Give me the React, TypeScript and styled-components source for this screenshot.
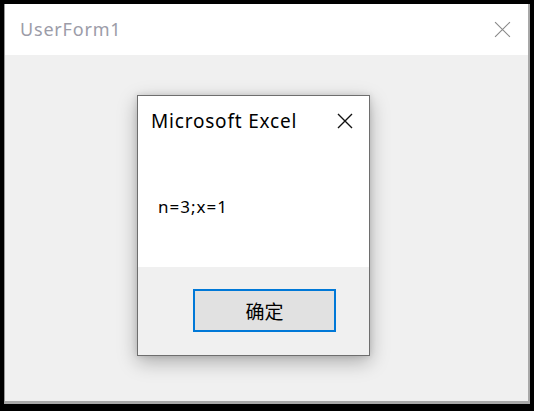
import React from "react";
import styled, { createGlobalStyle } from "styled-components";

const Global = createGlobalStyle`
  html, body { margin: 0; padding: 0; background: #000; }
  body { width: 534px; height: 411px; overflow: hidden; font-family: "Noto Sans", "Noto Sans CJK SC", sans-serif; }
`;

const Window = styled.div`
  box-sizing: border-box;
  width: 526px;
  height: 400px;
  margin: 4px 0 0 4px;
  background: #f0f0f0;
  border-left: 1px solid #9a9a9a;
  border-right: 2px solid #a8a8a8;
  border-bottom: 3px solid #a8a8a8;
  display: flex;
  flex-direction: column;
`;

const TitleBar = styled.div`
  height: 51px;
  flex: none;
  background: #fff;
  display: flex;
  align-items: center;
  justify-content: space-between;
  padding: 0 17px 0 15px;
`;

const TitleText = styled.span`
  font-family: "Noto Sans", "Noto Sans CJK SC", sans-serif;
  font-size: 18px;
  letter-spacing: 0.8px;
  color: #9c9ca8;
  margin-top: -2px;
`;

const Content = styled.div`
  flex: 1;
  padding: 40px 0 0 132px;
`;

const Dialog = styled.div`
  box-sizing: border-box;
  width: 233px;
  height: 261px;
  border: 1px solid #6e6e6e;
  background: #fff;
  display: flex;
  flex-direction: column;
  box-shadow: 0 6px 18px rgba(0, 0, 0, 0.28), 0 0 6px rgba(0, 0, 0, 0.12);
`;

const DialogHeader = styled.div`
  height: 50px;
  flex: none;
  display: flex;
  align-items: center;
  justify-content: space-between;
  padding: 0 16px 0 13px;
`;

const DialogTitle = styled.span`
  font-size: 19px;
  letter-spacing: 0.8px;
  color: #000;
  margin-top: 0px;
`;

const Message = styled.div`
  flex: 1;
  display: flex;
  align-items: center;
  padding-left: 20px;
  font-size: 17px;
  letter-spacing: 1px;
  color: #000;
`;

const Footer = styled.div`
  height: 88px;
  flex: none;
  background: #f0f0f0;
  padding: 22px 0 0 55px;
  box-sizing: border-box;
`;

const Button = styled.button`
  box-sizing: border-box;
  width: 143px;
  height: 43px;
  border: 2px solid #0078d7;
  background: #e1e1e1;
  font-family: "Noto Sans CJK SC", sans-serif;
  font-size: 19px;
  color: #000;
  padding: 0;
`;

const CloseIcon = ({ size, color, w }: { size: number; color: string; w: number }) => (
  <svg width={size} height={size} viewBox="0 0 16 16">
    <path d="M1 1 L15 15 M15 1 L1 15" stroke={color} strokeWidth={w} fill="none" />
  </svg>
);

export default function App() {
  return (
    <>
      <Global />
      <Window>
        <TitleBar>
          <TitleText>UserForm1</TitleText>
          <CloseIcon size={17} color="#8a8a8a" w={1.1} />
        </TitleBar>
        <Content>
          <Dialog>
            <DialogHeader>
              <DialogTitle>Microsoft Excel</DialogTitle>
              <CloseIcon size={16} color="#111" w={1.4} />
            </DialogHeader>
            <Message>n=3;x=1</Message>
            <Footer>
              <Button>确定</Button>
            </Footer>
          </Dialog>
        </Content>
      </Window>
    </>
  );
}
